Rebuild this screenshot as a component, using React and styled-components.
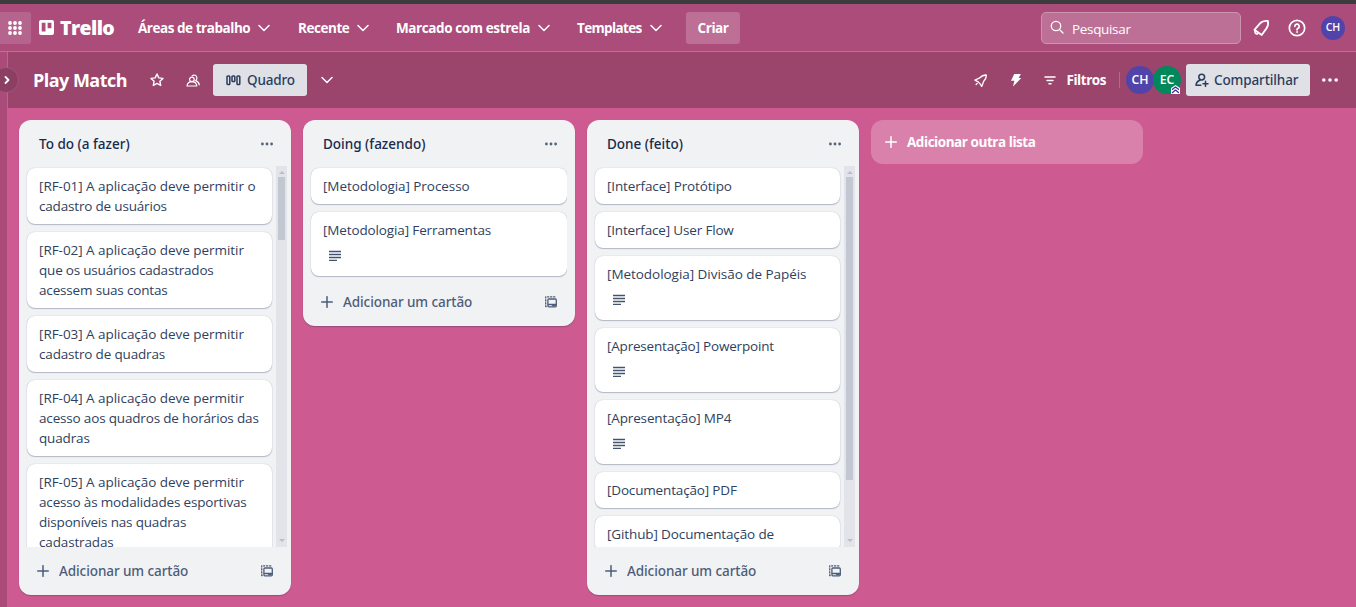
import React from "react";
import styled, { createGlobalStyle } from "styled-components";

const GlobalStyle = createGlobalStyle`
  *, *::before, *::after { box-sizing: border-box; }
  body {
    margin: 0;
    overflow: hidden;
    font-family: "Open Sans", "Noto Sans", sans-serif;
    font-size: 13.5px;
    line-height: 20px;
    color: #172b4d;
  }
  button { font: inherit; color: inherit; border: 0; padding: 0; background: none; }
  svg { display: block; flex: none; }
`;

const Page = styled.div`
  display: flex;
  flex-direction: column;
  width: 1356px;
  height: 607px;
  overflow: hidden;
  background: #cd5a91;
  border-top: 4px solid #3c3c3c;
`;

const Text = styled.span`
  white-space: nowrap;
  letter-spacing: ${(p) => p.$track || 0}px;
`;

/* Top navigation */
const TopBar = styled.header`
  display: flex;
  align-items: center;
  flex: none;
  height: 48px;
  background: #ac4c7a;
  border-bottom: 1px solid #bd7097;
  color: #fff;
  font-weight: 700;
`;

const AppsButton = styled.button`
  display: grid;
  place-items: center;
  width: 31px;
  height: 32px;
  padding-right: 2px;
  border-radius: 0 3px 3px 0;
  background: #b5658d;
`;

const Logo = styled.div`
  display: flex;
  align-items: center;
  gap: 6px;
  width: 99px;
  margin-left: 8px;
  font-size: 19.5px;
  font-weight: 800;
  & > :last-child { padding-top: 1px; }
`;

const NavItem = styled.button`
  display: flex;
  align-items: center;
  justify-content: space-between;
  width: ${(p) => p.$width}px;
  margin-right: ${(p) => p.$after}px;
`;

const CreateButton = styled.button`
  width: 54px;
  height: 32px;
  border-radius: 3px;
  background: #bd6f95;
`;

const Search = styled.div`
  display: flex;
  align-items: center;
  gap: 8px;
  width: 200px;
  height: 32px;
  margin-left: auto;
  padding: 2px 0 0 8px;
  border: 1px solid #cd94af;
  border-radius: 5px;
  background: #bd7095;
  font-weight: 400;
  & > svg { margin-top: -3px; }
`;

const TopIcons = styled.div`
  display: flex;
  align-items: center;
  gap: 15px;
  margin: 0 11px 0 11px;
  & > :first-child { margin-right: 3px; }
`;

const Avatar = styled.span`
  position: relative;
  display: grid;
  place-items: center;
  width: ${(p) => p.$size}px;
  height: ${(p) => p.$size}px;
  border-radius: 50%;
  background: ${(p) => p.$color};
  color: #fff;
  font-size: ${(p) => p.$size * 0.44}px;
  font-weight: 600;
  line-height: 1;
`;

const AdminMark = styled.span`
  position: absolute;
  right: 1px;
  bottom: 0;
`;

/* Board */
const Body = styled.div`
  display: flex;
  flex: 1;
  min-height: 0;
`;

const Rail = styled.aside`
  position: relative;
  flex: none;
  width: 8px;
  background: #aa4b79;
  border-right: 1px solid #b9698f;
`;

const RailToggle = styled.button`
  position: absolute;
  top: 15px;
  left: -7px;
  display: grid;
  place-items: center;
  width: 26px;
  height: 26px;
  padding-left: 2px;
  border: 1px solid #a65381;
  border-radius: 50%;
  background: #8b3f63;
  color: #fff;
`;

const Board = styled.main`
  display: flex;
  flex-direction: column;
  flex: 1;
  min-width: 0;
`;

const BoardBar = styled.div`
  display: flex;
  align-items: center;
  flex: none;
  height: 56px;
  padding: 0 18px 0 25px;
  background: #9b446c;
  color: #fff;
`;

const BoardTitle = styled.h1`
  width: 117px;
  margin: 0;
  font-size: 18px;
  font-weight: 700;
  line-height: 24px;
`;

const BoardTools = styled.div`
  display: flex;
  align-items: center;
  gap: ${(p) => p.$gap}px;
  margin-left: ${(p) => p.$before || 0}px;
`;

const LightButton = styled.button`
  display: flex;
  align-items: center;
  gap: ${(p) => p.$gap}px;
  width: ${(p) => p.$width}px;
  height: 32px;
  padding-left: ${(p) => p.$pad}px;
  border-radius: 3px;
  background: #dfe1e7;
  color: #2b3d5c;
  font-family: "Noto Sans", "Open Sans", sans-serif;
  font-weight: 500;
`;

const FilterButton = styled.button`
  display: flex;
  align-items: center;
  gap: 10px;
  font-weight: 700;
`;

const Divider = styled.span`
  width: 1px;
  height: 16px;
  margin: 0 6px 0 13px;
  background: #b0698b;
`;

const Members = styled.div`
  display: flex;
  margin-right: 5px;
  & > * + * { margin-left: -1px; }
`;

const Spacer = styled.div`
  flex: 1;
`;

const Lists = styled.div`
  display: flex;
  align-items: flex-start;
  gap: 12px;
  flex: 1;
  min-height: 0;
  padding: 12px 0 12px 11px;
`;

const List = styled.section`
  display: flex;
  flex-direction: column;
  flex: none;
  width: 272px;
  max-height: 100%;
  padding-bottom: 8px;
  border-radius: 12px;
  background: #f1f2f4;
  box-shadow: 0 1px 1px #091e4240;
`;

const ListHeader = styled.header`
  display: flex;
  align-items: center;
  justify-content: space-between;
  flex: none;
  height: 46px;
  padding: 2px 18px 0 20px;
  font-family: "Noto Sans", "Open Sans", sans-serif;
  font-weight: 500;
  color: #172b4d;
  & > svg { color: #55617a; }
`;

const ListBody = styled.div`
  display: flex;
  min-height: 0;
  padding-right: ${(p) => (p.$scrolls ? 4 : 8)}px;
`;

const Cards = styled.div`
  display: flex;
  flex-direction: column;
  flex: 1;
  gap: 8px;
  padding: 2px ${(p) => (p.$scrolls ? 4 : 0)}px 2px 8px;
  overflow: hidden;
`;

const Card = styled.article`
  flex: none;
  min-height: 36px;
  padding: 8px 12px;
  border-radius: 8px;
  background: #fff;
  box-shadow: 0 1px 1px #091e4240, 0 0 1px #091e424f;
  color: #2f3f60;
`;

const CardLine = styled.div`
  white-space: nowrap;
  letter-spacing: ${(p) => p.$track}px;
`;

const CardBadges = styled.div`
  display: flex;
  height: 28px;
  padding: 10px 0 0 6px;
`;

const ScrollTrack = styled.div`
  display: flex;
  flex-direction: column;
  align-items: center;
  flex: none;
  width: 11px;
  background: #e3e4e9;
`;

const ScrollArrow = styled.span`
  width: 0;
  height: 0;
  margin: ${(p) => (p.$down ? "auto 0 5px" : "5px 0 3px")};
  border: solid transparent;
  border-width: ${(p) => (p.$down ? "3px 3px 0" : "0 3px 3px")};
  border-top-color: ${(p) => (p.$down ? "#babec8" : "transparent")};
  border-bottom-color: ${(p) => (p.$down ? "transparent" : "#babec8")};
`;

const ScrollThumb = styled.span`
  width: 7px;
  height: ${(p) => p.$height}px;
  background: #c3c7d1;
`;

const ListFooter = styled.footer`
  display: flex;
  align-items: center;
  flex: none;
  gap: 10px;
  height: 32px;
  margin-top: 8px;
  padding: 0 18px 0 18px;
  color: #4d5d79;
  font-family: "Noto Sans", "Open Sans", sans-serif;
  font-weight: 500;
  & > :last-child { margin-left: auto; }
`;

const AddList = styled.button`
  display: flex;
  align-items: center;
  gap: 10px;
  width: 272px;
  height: 44px;
  padding-left: 14px;
  border-radius: 12px;
  background: #da81ab;
  color: #fff;
  font-weight: 700;
`;

/* Icons */
const Svg = ({ w, h = w, sw = 1.5, children, box }) => (
  <svg width={w} height={h} viewBox={box || `0 0 ${w} ${h}`} fill="none" stroke="currentColor"
    strokeWidth={sw} strokeLinecap="round" strokeLinejoin="round">{children}</svg>
);

const AppsIcon = () => (
  <Svg w={14}>
    <g fill="currentColor" stroke="none">
      {[2, 7, 12].map((y) => [2, 7, 12].map((x) => <circle key={`${x}-${y}`} cx={x} cy={y} r="1.9" />))}
    </g>
  </Svg>
);
const TrelloIcon = () => (
  <Svg w={15}>
    <path stroke="none" fill="currentColor" fillRule="evenodd"
      d="M2 0h11a2 2 0 0 1 2 2v11a2 2 0 0 1-2 2H2a2 2 0 0 1-2-2V2a2 2 0 0 1 2-2zM2.700 2.800v8.700h3.800V2.800zM8.600 2.800v5.400h3.800V2.800z" />
  </Svg>
);
const ChevronDown = ({ w = 12 }) => (
  <Svg w={w} h={8} box="0 0 12 8" sw={1.5}><path d="M1 1.500l5 5 5-5" /></Svg>
);
const ChevronRight = () => <Svg w={6} h={8} sw={1.8}><path d="M1.500 1l3 3-3 3" /></Svg>;
const SearchIcon = () => (
  <Svg w={14} sw={1.3}><circle cx="6" cy="6" r="4.700" /><path d="M9.600 9.600L13 13" /></Svg>
);
const BellIcon = () => (
  <Svg w={18} sw={1.8}>
    <path d="M2.400 10.800L8 4.400C10 2.300 12.500 1.600 15.900 1.900C16.600 5 16 7.400 14.300 9.600L9.700 16z" />
    <path d="M3 12.600C2.900 14 4 15 5.400 14.800" />
  </Svg>
);
const HelpIcon = () => (
  <Svg w={18} sw={1.7}>
    <circle cx="9" cy="9" r="7.700" />
    <path d="M6.800 7.300a2.200 2.200 0 1 1 3.200 2c-.7.400-1 .8-1 1.500" />
    <circle cx="9" cy="13" r=".5" fill="currentColor" strokeWidth=".8" />
  </Svg>
);
const StarIcon = () => (
  <Svg w={14} sw={1.4}><path d="M7 1l1.800 3.900 4.200.5-3.100 2.900.8 4.200L7 10.400l-3.700 2.100.8-4.200L1 5.400l4.200-.5z" /></Svg>
);
const PeopleIcon = () => (
  <Svg w={14} h={13} sw={1.2}>
    <circle cx="5.900" cy="5.400" r="2.300" />
    <path d="M1 12c.3-2.600 2.300-4.300 4.900-4.300s4.600 1.700 4.900 4.300z" />
    <path d="M6.200 1.700c1.600-1.300 4.700-.5 4.700 2.200 0 1.200-.5 2-1.300 2.700 2.100.7 3.400 2 3.700 4.200" />
  </Svg>
);
const BoardIcon = () => (
  <Svg w={15} h={11} sw={1.5}>
    <rect x="1" y="1" width="2.800" height="8.500" rx=".8" />
    <rect x="6" y="1" width="2.800" height="5.500" rx=".8" />
    <rect x="11" y="1" width="2.800" height="8.500" rx=".8" />
  </Svg>
);
const RocketIcon = () => (
  <Svg w={14} h={13} sw={1.3}>
    <path d="M12.300 1C9.600 1 7.500 1.900 5.800 3.900L.9 6.100l3.300 1.800 1.700 1.700 1.800 2.800 2-5.100C11.500 5.600 12.400 3.500 12.300 1z" />
    <path d="M3.200 9.400L2.100 10.500" />
  </Svg>
);
const BoltIcon = () => (
  <Svg w={12} h={14}>
    <path fill="currentColor" stroke="none" d="M4.200 1h6.700L8.600 5.100h2.700L3 13.400l1.400-5.600H1z" />
  </Svg>
);
const FilterIcon = () => (
  <Svg w={12} h={9} sw={1.5}><path d="M1 1h10M3 4.400h6M5 7.800h2" /></Svg>
);
const AdminIcon = () => (
  <Svg w={9} sw={1.3}>
    <path fill="#fff" stroke="none" d="M0 3L4.500 0L9 3V9H0z" />
    <path stroke="#403294" d="M1.500 4.300l3-2.400 3 2.400M1.500 7.500l3-2.400 3 2.400" />
  </Svg>
);
const PersonPlusIcon = () => (
  <Svg w={14} sw={1.5}>
    <circle cx="6.700" cy="4.100" r="2.900" />
    <path d="M5 7.200C2.500 8 1.200 9.500 1 12.300h4.800M10.500 8.300v5M8 10.800h5" />
  </Svg>
);
const Dots = ({ w, r }) => (
  <Svg w={w} h={4}>
    <g fill="currentColor" stroke="none">
      <circle cx={r} cy="2" r={r} /><circle cx={w / 2} cy="2" r={r} /><circle cx={w - r} cy="2" r={r} />
    </g>
  </Svg>
);
const PlusIcon = () => <Svg w={12} sw={1.5}><path d="M6 .7v10.600M.7 6h10.600" /></Svg>;
const DescriptionIcon = () => (
  <Svg w={12} h={11}>
    <path strokeLinecap="butt" stroke="#44546f" d="M0 1.500h12M0 4.500h12M0 7.500h12M0 10.500h8" strokeWidth="1.300" />
  </Svg>
);
const TemplateIcon = () => (
  <Svg w={12} sw={1.3}>
    <rect x="2.900" y="3" width="8.400" height="7.800" rx="1" />
    <path d="M3.300 8.500h7.600" /><path d="M7.500 9.600h2.700" />
    <path strokeLinecap="butt" strokeDasharray="2.200 .8" d="M1.700 10.500H.7V.9h10.300" />
  </Svg>
);

const todo = [
  { lines: [["[RF-01] A aplicação deve permitir o", -0.04], ["cadastro de usuários", -0.18]] },
  { lines: [["[RF-02] A aplicação deve permitir", -0.04], ["que os usuários cadastrados", -0.2], ["acessem suas contas", -0.17]] },
  { lines: [["[RF-03] A aplicação deve permitir", -0.04], ["cadastro de quadras", -0.17]] },
  { lines: [["[RF-04] A aplicação deve permitir", -0.04], ["acesso aos quadros de horários das", -0.17], ["quadras", -0.14]] },
  { lines: [["[RF-05] A aplicação deve permitir", -0.04], ["acesso às modalidades esportivas", -0.17], ["disponíveis nas quadras", -0.18], ["cadastradas", -0.15]] },
];
const doing = [
  { lines: [["[Metodologia] Processo", -0.06]] },
  { lines: [["[Metodologia] Ferramentas", -0.13]], description: true },
];
const done = [
  { lines: [["[Interface] Protótipo", -0.14]] },
  { lines: [["[Interface] User Flow", -0.17]] },
  { lines: [["[Metodologia] Divisão de Papéis", -0.04]], description: true },
  { lines: [["[Apresentação] Powerpoint", -0.19]], description: true },
  { lines: [["[Apresentação] MP4", -0.14]], description: true },
  { lines: [["[Documentação] PDF", -0.16]] },
  { lines: [["[Github] Documentação de", -0.12]] },
];

const BoardList = ({ title, track, cards, thumb }) => (
  <List>
    <ListHeader><Text $track={track}>{title}</Text><Dots w={12} r={1.4} /></ListHeader>
    <ListBody $scrolls={!!thumb}>
      <Cards $scrolls={!!thumb}>
        {cards.map((card) => (
          <Card key={card.lines[0][0]}>
            {card.lines.map(([text, t]) => <CardLine key={text} $track={t}>{text}</CardLine>)}
            {card.description && <CardBadges><DescriptionIcon /></CardBadges>}
          </Card>
        ))}
      </Cards>
      {thumb && (
        <ScrollTrack><ScrollArrow /><ScrollThumb $height={thumb} /><ScrollArrow $down /></ScrollTrack>
      )}
    </ListBody>
    <ListFooter><PlusIcon /><Text $track={-0.08}>Adicionar um cartão</Text><TemplateIcon /></ListFooter>
  </List>
);

const navItems = [
  ["Áreas de trabalho", -0.46, 132, 28],
  ["Recente", -0.45, 71, 27],
  ["Marcado com estrela", -0.4, 154, 27],
  ["Templates", -0.65, 85, 24],
];

export default function App() {
  return (
    <>
      <GlobalStyle />
      <Page>
        <TopBar>
          <AppsButton><AppsIcon /></AppsButton>
          <Logo><TrelloIcon /><Text $track={-0.6}>Trello</Text></Logo>
          {navItems.map(([label, track, width, after]) => (
            <NavItem key={label} $width={width} $after={after}><Text $track={track}>{label}</Text><ChevronDown /></NavItem>
          ))}
          <CreateButton><Text $track={-0.45}>Criar</Text></CreateButton>
          <Search><SearchIcon /><Text $track={-0.33}>Pesquisar</Text></Search>
          <TopIcons>
            <BellIcon /><HelpIcon />
            <Avatar $size={24} $color="#5243aa">CH</Avatar>
          </TopIcons>
        </TopBar>
        <Body>
          <Rail><RailToggle><ChevronRight /></RailToggle></Rail>
          <Board>
            <BoardBar>
              <BoardTitle><Text $track={-0.53}>Play Match</Text></BoardTitle>
              <BoardTools $gap={22}><StarIcon /><PeopleIcon /></BoardTools>
              <BoardTools $gap={13} $before={13}>
                <LightButton $width={94} $pad={13} $gap={6}><BoardIcon /><Text $track={-0.15}>Quadro</Text></LightButton>
                <ChevronDown w={14} />
              </BoardTools>
              <Spacer />
              <BoardTools $gap={22}><RocketIcon /><BoltIcon /><FilterButton><FilterIcon /><Text $track={-0.45}>Filtros</Text></FilterButton></BoardTools>
              <Divider />
              <Members>
                <Avatar $size={28} $color="#5243aa">CH</Avatar>
                <Avatar $size={28} $color="#00875a">EC<AdminMark><AdminIcon /></AdminMark></Avatar>
              </Members>
              <LightButton $width={124} $pad={9} $gap={5}><PersonPlusIcon /><Text $track={-0.12}>Compartilhar</Text></LightButton>
              <BoardTools $before={12}><Dots w={16} r={1.8} /></BoardTools>
            </BoardBar>
            <Lists>
              <BoardList title="To do (a fazer)" track={0} cards={todo} thumb={63} />
              <BoardList title="Doing (fazendo)" track={0} cards={doing} />
              <BoardList title="Done (feito)" track={0} cards={done} thumb={303} />
              <AddList><PlusIcon /><Text $track={-0.45}>Adicionar outra lista</Text></AddList>
            </Lists>
          </Board>
        </Body>
      </Page>
    </>
  );
}
